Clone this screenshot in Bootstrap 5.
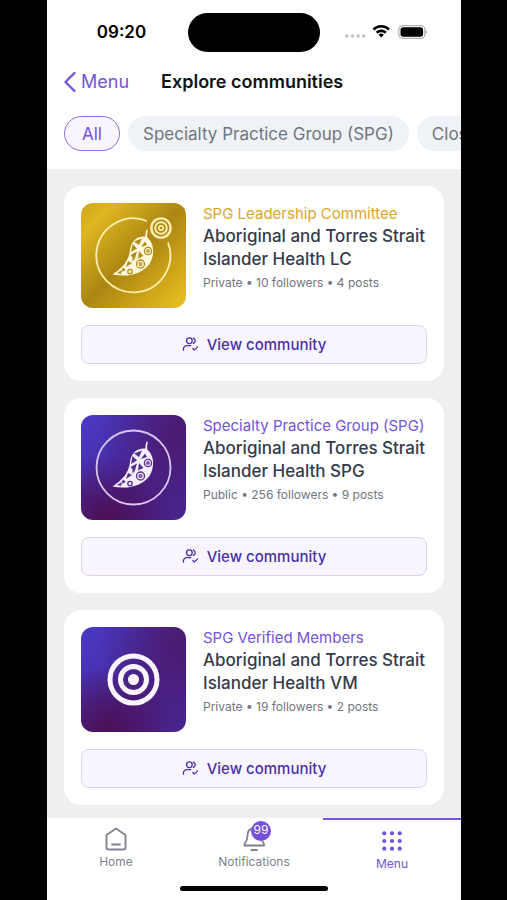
<!DOCTYPE html>
<html lang="en">
<head>
<meta charset="utf-8">
<meta name="viewport" content="width=device-width, initial-scale=1">
<title>Explore communities</title>
<link href="https://cdn.jsdelivr.net/npm/bootstrap@5.3.0/dist/css/bootstrap.min.css" rel="stylesheet">
<style>
  body { background: #000; font-family: Inter, "Open Sans", sans-serif; padding: 0 46px 0 47px; }
  .app-shell { background: #efefef; }
  .status-bar { height: 64px; }
  .status-side { flex: 1 1 0; }
  .island { width: 132px; height: 39px; }
  .clock { font-size: 17px; line-height: 24px; }
  .title-bar { height: 35px; }
  .back-link { color: #7353d9; font-size: 18px; }
  .page-title { font-size: 18px; line-height: 24px; color: #111; }
  .chip-row { padding: 17px 0 18px 17px; gap: 8px; }
  .chip { height: 35px; font-size: 17px; line-height: 22px; color: #707582; background: #eff2f6; border: 1px solid #eff2f6; padding: 0 14px; }
  .chip-on { color: #7353d9; background: #f9f5ff; border-color: #8b6fdf; padding: 0 17px; }
  .feed { padding: 17px 17px 13px; gap: 17px; }
  .community { border-radius: 17px; padding: 17px; gap: 17px; }
  .community-top { gap: 17px; }
  .thumb { width: 105px; height: 105px; border-radius: 12px; }
  .thumb-gold { background: linear-gradient(135deg, #cfa61e 0%, #ddb61f 16%, #ab8613 50%, #c39b17 68%, #e9c31f 100%); }
  .thumb-purple { background: radial-gradient(circle at 25% 100%, #4c0f54 0%, rgba(76,15,84,0) 50%), radial-gradient(circle at 95% 10%, rgba(76,24,104,.8) 0%, rgba(76,24,104,0) 60%), linear-gradient(135deg, #4b39c4 0%, #4833b4 25%, #48228a 60%, #49248c 100%); }
  .kind { font-size: 15px; line-height: 22px; color: #7353d9; }
  .kind-gold { color: #dda62c; }
  .name { font-size: 17px; line-height: 23px; color: #353b4d; }
  .meta { font-size: 12px; line-height: 23px; color: #707582; }
  .btn-view { height: 39px; font-size: 15px; line-height: 22px; gap: 8px; color: #4b2fa6; background: #f9f5ff; border: 1px solid #ddd3f7; border-radius: 8px; }
  .btn-view:hover { color: #4b2fa6; background: #f3edff; border-color: #ddd3f7; }
  .tab { font-size: 12px; line-height: 16px; color: #7d828d; padding-top: 5px; border-top: 2px solid #fff; gap: 1px; }
  .tab-on { color: #7353d9; border-color: #7353d9; padding-top: 7px; }
  .count { left: 11px; top: -4px; width: 20px; height: 20px; font-size: 12px; line-height: 17px; background: #7550d8; }
  .home-bar { width: 148px; height: 5px; margin-bottom: 9px; }
  .tabs { height: 68px; }
</style>
<script src="https://cdn.jsdelivr.net/npm/bootstrap@5.3.0/dist/js/bootstrap.bundle.min.js"></script>
</head>
<body>
<svg width="0" height="0" class="position-absolute" aria-hidden="true">
  <symbol id="pod" viewBox="0 0 84 84">
    <path d="M57 17.500Q55.500 21 56.500 26" fill="none" stroke="currentColor" stroke-width="1.700" stroke-linecap="round"/>
    <path d="M56 23.500C47 22.500 41 28 40 37C39 48 32 55 22.500 61.500C39 65 53 60 59.500 51C65.500 41 64 29 56 23.500Z" fill="currentColor"/>
  </symbol>
  <symbol id="pod-marks" viewBox="0 0 84 84">
    <path d="M44 28.500L52 25.500L49 32ZM42.500 31L47 35.500L41 39ZM51 34L55 28.500L57 32ZM40.500 42L47 38.500L44.500 47ZM49 38L53.500 43L48 45.500ZM38 48L42 50L36 54ZM33 54.500L36 57L31 59ZM27 60L31 57.500L31.500 61ZM42 46L44 44.500L43 49Z"/>
    <g fill="none" stroke="currentColor" stroke-width="1.300"><circle cx="58" cy="38" r="3.600"/><circle cx="58" cy="38" r="1.200"/><circle cx="50.500" cy="51" r="4"/><circle cx="50.500" cy="51" r="1.400"/><circle cx="40" cy="58.500" r="2.200"/></g>
  </symbol>
  <symbol id="person-check" viewBox="0 0 18 18">
    <g fill="none" stroke="currentColor" stroke-width="1.400" stroke-linecap="round" stroke-linejoin="round"><circle cx="7.800" cy="5" r="3"/><path d="M12 2.200a3 3 0 0 1 0 5.600M1.500 15v-1.200a3.600 3.600 0 0 1 3.600-3.600h4.100M11.500 13.200l1.700 1.500 3.300-3.200"/></g>
  </symbol>
</svg>
<div class="app-shell d-flex flex-column min-vh-100 overflow-hidden">
  <header class="bg-white">
    <div class="status-bar d-flex align-items-center justify-content-center">
      <div class="status-side clock fw-semibold text-black text-center ps-2">09:20</div>
      <div class="island bg-black rounded-pill"></div>
      <div class="status-side d-flex justify-content-center pe-2">
        <svg width="84" height="18" viewBox="0 0 84 18" role="img" aria-label="Wi-Fi on, battery full">
          <g fill="#c2c2c2"><circle cx="1.800" cy="13" r="1.800"/><circle cx="7.500" cy="13" r="1.800"/><circle cx="13.200" cy="13" r="1.800"/><circle cx="18.800" cy="13" r="1.800"/></g>
          <g transform="translate(-2 0)"><g fill="none" stroke="#000" stroke-width="2.600"><path d="M30.500 6.500a11 11 0 0 1 15.500 0"/><path d="M33.700 9.700a6.600 6.600 0 0 1 9.100 0"/></g>
          <path d="M35.600 11.800a3.900 3.900 0 0 1 5.300 0l-2.650 2.800z"/>
          <rect x="55.800" y="2.600" width="26" height="12.800" rx="4" fill="#fff" stroke="#b5b5b5" stroke-width="1.300"/><rect x="57.500" y="4.300" width="22.600" height="9.400" rx="2.600"/><path d="M82.700 7v4q1.300-.5 1.300-2t-1.300-2z" fill="#aaa"/></g>
        </svg>
      </div>
    </div>
    <div class="title-bar d-flex align-items-center">
      <a href="#" class="back-link d-flex align-items-center text-decoration-none ms-3">
        <svg class="me-1" width="14" height="22" viewBox="0 0 14 22" aria-hidden="true"><path d="M11.500 2L2.500 11l9 9" fill="none" stroke="currentColor" stroke-width="2.400" stroke-linecap="round" stroke-linejoin="round"/></svg>Menu</a>
      <h1 class="page-title fw-semibold mb-0 ps-2 ms-4">Explore communities</h1>
    </div>
    <div class="chip-row d-flex overflow-hidden">
      <button type="button" class="chip chip-on rounded-pill flex-shrink-0">All</button>
      <button type="button" class="chip rounded-pill flex-shrink-0">Specialty Practice Group (SPG)</button>
      <button type="button" class="chip rounded-pill flex-shrink-0">Closed</button>
    </div>
  </header>
  <main class="feed d-flex flex-column flex-grow-1">
    <article class="community bg-white d-flex flex-column">
      <div class="community-top d-flex">
        <svg class="thumb thumb-gold flex-shrink-0" viewBox="0 0 105 105" aria-hidden="true">
          <path d="M66 18A37 37 0 1 0 87 39.500" fill="none" stroke="#fff0b0" stroke-width="1.800"/>
          <g fill="none" stroke="#fff0b0"><circle cx="80" cy="25" r="9.600" stroke-width="2.400"/><circle cx="80" cy="25" r="5.800" stroke-width="2"/><circle cx="80" cy="25" r="2.200" stroke-width="1.700"/></g>
          <use href="#pod" x="9" y="10" width="84" height="84" color="#fff8dc"/><use href="#pod-marks" x="9" y="10" width="84" height="84" color="#b18c19" fill="#b18c19"/>
        </svg>
        <div>
          <div class="kind kind-gold">SPG Leadership Committee</div>
          <h2 class="name fw-medium mb-0">Aboriginal and Torres Strait Islander Health LC</h2>
          <div class="meta">Private • 10 followers • 4 posts</div>
        </div>
      </div>
      <button type="button" class="btn btn-view fw-medium d-flex align-items-center justify-content-center p-0"><svg width="17" height="17" aria-hidden="true"><use href="#person-check"/></svg>View community</button>
    </article>
    <article class="community bg-white d-flex flex-column">
      <div class="community-top d-flex">
        <svg class="thumb thumb-purple flex-shrink-0" viewBox="0 0 105 105" aria-hidden="true">
          <circle cx="52.500" cy="52.500" r="37" fill="none" stroke="#d9c6f0" stroke-width="1.800"/>
          <use href="#pod" x="9" y="10" width="84" height="84" color="#f5effc"/><use href="#pod-marks" x="9" y="10" width="84" height="84" color="#54308c" fill="#54308c"/>
        </svg>
        <div>
          <div class="kind">Specialty Practice Group (SPG)</div>
          <h2 class="name fw-medium mb-0">Aboriginal and Torres Strait Islander Health SPG</h2>
          <div class="meta">Public • 256 followers • 9 posts</div>
        </div>
      </div>
      <button type="button" class="btn btn-view fw-medium d-flex align-items-center justify-content-center p-0"><svg width="17" height="17" aria-hidden="true"><use href="#person-check"/></svg>View community</button>
    </article>
    <article class="community bg-white d-flex flex-column">
      <div class="community-top d-flex">
        <svg class="thumb thumb-purple flex-shrink-0" viewBox="0 0 105 105" aria-hidden="true">
          <g fill="none" stroke="#faf5ff" stroke-width="5"><circle cx="52.500" cy="52.500" r="23.500"/><circle cx="52.500" cy="52.500" r="13"/></g><circle cx="52.500" cy="52.500" r="5.500" fill="#faf5ff"/>
        </svg>
        <div>
          <div class="kind">SPG Verified Members</div>
          <h2 class="name fw-medium mb-0">Aboriginal and Torres Strait Islander Health VM</h2>
          <div class="meta">Private • 19 followers • 2 posts</div>
        </div>
      </div>
      <button type="button" class="btn btn-view fw-medium d-flex align-items-center justify-content-center p-0"><svg width="17" height="17" aria-hidden="true"><use href="#person-check"/></svg>View community</button>
    </article>
  </main>
  <footer class="bg-white sticky-bottom">
    <nav class="tabs row g-0 text-center" aria-label="Main">
      <a href="#" class="tab col d-flex flex-column align-items-center text-decoration-none">
        <svg width="28" height="28" viewBox="0 0 28 28" aria-hidden="true"><path d="M14 3.500L4.500 10v12.500q0 2 2 2h15q2 0 2-2V10zM10 19.500h8" fill="none" stroke="currentColor" stroke-width="1.800" stroke-linecap="round" stroke-linejoin="round"/></svg>
        <span>Home</span></a>
      <a href="#" class="tab col d-flex flex-column align-items-center text-decoration-none">
        <span class="position-relative d-flex"><svg width="28" height="28" viewBox="0 0 28 28" aria-hidden="true"><path d="M14 3.500c-4.500 0-6.500 3-6.500 7 0 4-1 6-3 8.500v1.500h19.500v-1.500C22 16.500 21 14.500 21 10.500c0-4-2.500-7-7-7zM11.500 25h5.500" fill="none" stroke="currentColor" stroke-width="1.800" stroke-linecap="round" stroke-linejoin="round"/></svg><span class="count position-absolute rounded-circle text-white">99</span></span>
        <span>Notifications</span></a>
      <a href="#" class="tab tab-on col d-flex flex-column align-items-center text-decoration-none" aria-current="page">
        <svg width="28" height="28" viewBox="0 0 28 28" fill="currentColor" aria-hidden="true"><circle cx="6.300" cy="6.300" r="2.100"/><circle cx="14" cy="6.300" r="2.100"/><circle cx="21.700" cy="6.300" r="2.100"/><circle cx="6.300" cy="14" r="2.100"/><circle cx="14" cy="14" r="2.100"/><circle cx="21.700" cy="14" r="2.100"/><circle cx="6.300" cy="21.700" r="2.100"/><circle cx="14" cy="21.700" r="2.100"/><circle cx="21.700" cy="21.700" r="2.100"/></svg>
        <span>Menu</span></a>
    </nav>
    <div class="home-bar bg-black rounded-pill mx-auto"></div>
  </footer>
</div>
</body>
</html>
